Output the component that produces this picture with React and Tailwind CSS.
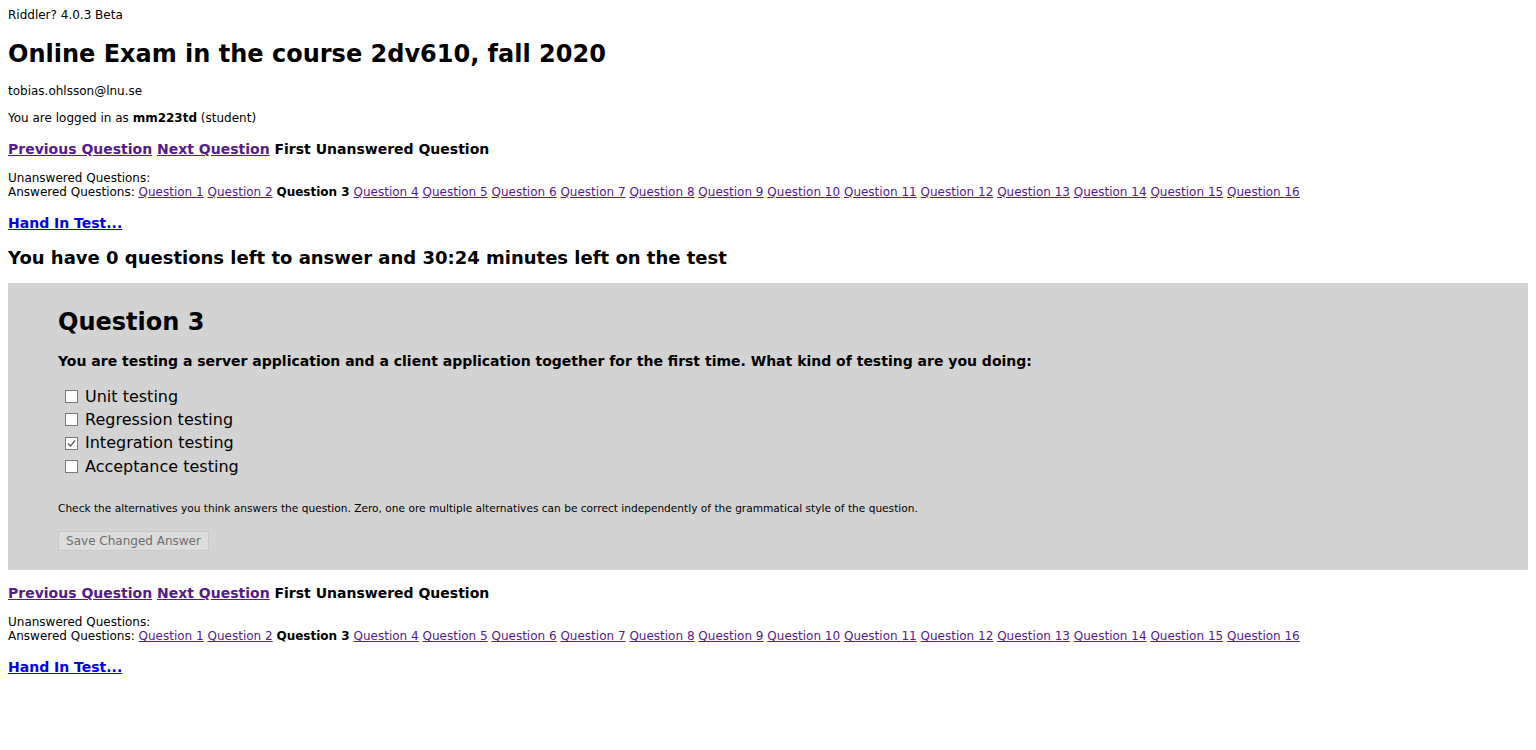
import React from "react";

const Q = Array.from({ length: 16 }, (_, i) => i + 1);

function Nav({ top }) {
  return (
    <>
      <div className={`text-[14px] leading-[16px] font-bold ${top}`}>
        <a href="#" className="underline text-[#551a8b]">Previous Question</a>{" "}
        <a href="#" className="underline text-[#551a8b]">Next Question</a>{" "}
        <span>First Unanswered Question</span>
      </div>
      <div className="text-[12px] leading-[14px] mt-[14px]">
        <div>Unanswered Questions:</div>
        <div>
          Answered Questions:{" "}
          {Q.map((n) =>
            n === 3 ? (
              <React.Fragment key={n}>
                <b>Question 3</b>{" "}
              </React.Fragment>
            ) : (
              <React.Fragment key={n}>
                <a href="#" className="underline text-[#551a8b]">Question {n}</a>{" "}
              </React.Fragment>
            )
          )}
        </div>
      </div>
      <div className="text-[14px] leading-[16px] font-bold mt-[16px]">
        <a href="#" className="underline text-[#0000ee]">Hand In Test...</a>
      </div>
    </>
  );
}

function Opt({ label, checked }) {
  return (
    <div className="flex items-center h-[23.33px]">
      <span className="w-[13px] h-[13px] border border-[#767676] bg-white ml-[7px] mr-[7px] flex items-center justify-center">
        {checked && (
          <svg width="11" height="11" viewBox="0 0 11 11">
            <path d="M2 5.5 L4.5 8 L9 2.5" fill="none" stroke="#555" strokeWidth="1.2" />
          </svg>
        )}
      </span>
      <span className="text-[16px]">{label}</span>
    </div>
  );
}

export default function App() {
  return (
    <div className="px-[8px] pt-[7px] pb-[60px] text-black" style={{ fontFamily: '"DejaVu Sans", Verdana, sans-serif' }}>
      <div className="text-[12px] leading-[16px]">Riddler? 4.0.3 Beta</div>
      <h1 className="text-[24px] leading-[30px] font-bold mt-[16px]">Online Exam in the course 2dv610, fall 2020</h1>
      <div className="text-[12px] leading-[14px] mt-[15px]">tobias.ohlsson@lnu.se</div>
      <div className="text-[12px] leading-[14px] mt-[13px]">
        You are logged in as <b>mm223td</b> (student)
      </div>
      <Nav top="mt-[16px]" />
      <div className="text-[18px] leading-[22px] font-bold mt-[16px]">
        You have 0 questions left to answer and 30:24 minutes left on the test
      </div>
      <div className="bg-[#d3d3d3] mt-[14px] pl-[50px] pt-[24px] pb-[19px]">
        <h2 className="text-[24px] leading-[30px] font-bold">Question 3</h2>
        <div className="text-[14px] leading-[16px] font-bold mt-[16px]">
          You are testing a server application and a client application together for the first time. What kind of testing are you doing:
        </div>
        <div className="mt-[16px]">
          <Opt label="Unit testing" />
          <Opt label="Regression testing" />
          <Opt label="Integration testing" checked />
          <Opt label="Acceptance testing" />
        </div>
        <div className="text-[10.6px] leading-[12px] mt-[24px]">
          Check the alternatives you think answers the question. Zero, one ore multiple alternatives can be correct independently of the grammatical style of the question.
        </div>
        <button disabled className="mt-[17px] h-[20px] w-[151px] text-[12px] text-[#6d6d6d] bg-[#dcdcdc] border border-[#c8c8c8] block">
          Save Changed Answer
        </button>
      </div>
      <Nav top="mt-[15px]" />
    </div>
  );
}
